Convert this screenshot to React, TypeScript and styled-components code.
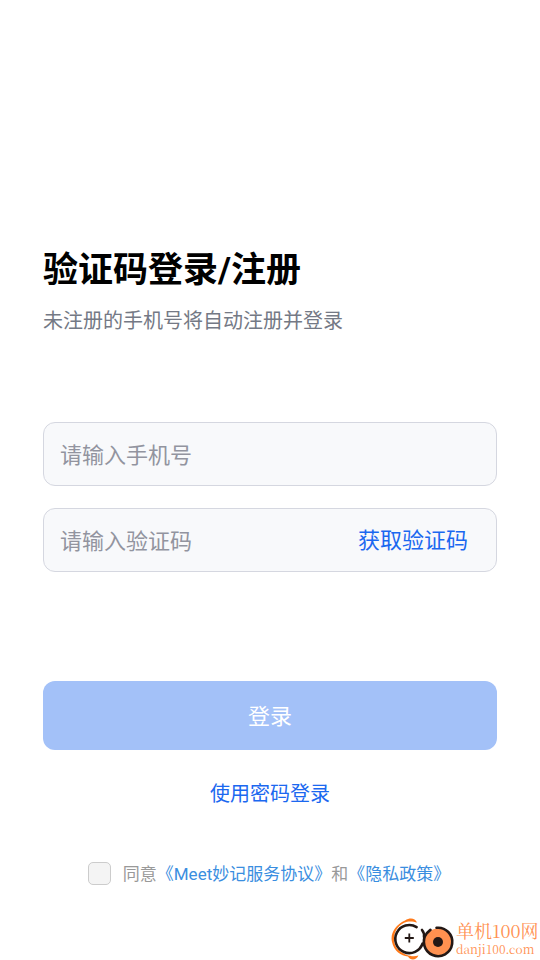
import React, { useState } from "react";
import styled, { createGlobalStyle } from "styled-components";

const GlobalStyle = createGlobalStyle`
  * { box-sizing: border-box; }
  body {
    margin: 0;
    background: #fff;
    font-family: Roboto, "Noto Sans CJK SC", sans-serif;
  }
  button, input { font-family: inherit; }
`;

const Page = styled.main`
  display: flex;
  flex-direction: column;
  min-height: 100vh;
  padding-top: 245px;
`;

const Form = styled.form`
  display: flex;
  flex-direction: column;
  padding: 0 43px;
`;

const Title = styled.h1`
  margin: 0;
  font-size: 35px;
  line-height: 52px;
  font-weight: 700;
  color: #000;
`;

const Subtitle = styled.p`
  margin: 9px 0 0;
  font-size: 20px;
  line-height: 30px;
  color: #747985;
`;

const Fields = styled.div`
  display: flex;
  flex-direction: column;
  gap: 22px;
  margin-top: 86px;
`;

const Field = styled.div`
  display: flex;
  align-items: center;
  height: 64px;
  padding: 2px 28px 0 16px;
  border: 1px solid #d5d7e0;
  border-radius: 12px;
  background: #f8f9fb;
`;

const TextInput = styled.input`
  flex: 1;
  min-width: 0;
  height: 100%;
  padding: 0;
  border: 0;
  outline: 0;
  background: transparent;
  font-size: 22px;
  color: #111;
  &::placeholder {
    color: #92949f;
    opacity: 1;
  }
`;

const TextButton = styled.button<{ $size: number }>`
  padding: 0;
  border: 0;
  background: transparent;
  font-size: ${({ $size }) => $size}px;
  line-height: 32px;
  color: #1b68f0;
  cursor: pointer;
`;

const SubmitButton = styled.button`
  height: 69px;
  margin-top: 109px;
  padding: 0 0 4px;
  border: 0;
  border-radius: 12px;
  background: #a3c1f8;
  font-size: 22px;
  color: #fff;
`;

const SwitchRow = styled.div`
  display: flex;
  justify-content: center;
  margin-top: 28px;
`;

const Agreement = styled.div`
  display: flex;
  align-items: center;
  justify-content: center;
  gap: 12px;
  margin-top: 49px;
  padding-right: 2px;
  font-size: 17px;
  line-height: 26px;
  color: #999;
`;

const AgreementLabel = styled.label`
  padding-top: 2px;
`;

const Checkbox = styled.input`
  appearance: none;
  flex: none;
  width: 23px;
  height: 23px;
  margin: 0;
  border: 1px solid #ccc;
  border-radius: 5px;
  background: #f4f4f4;
  &:checked { background: #1b68f0; }
`;

const PolicyLink = styled.a`
  color: #3a8ee0;
  text-decoration: none;
`;

const SiteMark = styled.footer`
  display: flex;
  align-items: flex-end;
  justify-content: flex-end;
  margin-top: auto;
  padding-right: 3px;
`;

const SiteLogo = styled.svg`
  flex: none;
  width: 68px;
  height: 48px;
`;

const SiteText = styled.div`
  display: flex;
  flex-direction: column;
  width: 81px;
  padding-bottom: 2px;
  font-family: "Noto Serif CJK SC", "Liberation Serif", "Noto Sans CJK SC", serif;
  color: #ff9152;
  white-space: nowrap;
`;

const SiteName = styled.span`
  font-size: 18px;
  line-height: 20px;
`;

const SiteAddress = styled.span`
  font-size: 12px;
  line-height: 18px;
`;

export default function App() {
  const [agreed, setAgreed] = useState(false);
  return (
    <>
      <GlobalStyle />
      <Page>
        <Form onSubmit={(e) => e.preventDefault()}>
          <Title>验证码登录/注册</Title>
          <Subtitle>未注册的手机号将自动注册并登录</Subtitle>
          <Fields>
            <Field>
              <TextInput type="tel" aria-label="手机号" placeholder="请输入手机号" />
            </Field>
            <Field>
              <TextInput type="text" aria-label="验证码" placeholder="请输入验证码" />
              <TextButton type="button" $size={22}>获取验证码</TextButton>
            </Field>
          </Fields>
          <SubmitButton type="submit">登录</SubmitButton>
          <SwitchRow>
            <TextButton type="button" $size={20}>使用密码登录</TextButton>
          </SwitchRow>
          <Agreement>
            <Checkbox
              id="agree"
              type="checkbox"
              checked={agreed}
              onChange={(e) => setAgreed(e.target.checked)}
            />
            <AgreementLabel htmlFor="agree">
              同意<PolicyLink href="#service">《Meet妙记服务协议》</PolicyLink>和
              <PolicyLink href="#privacy">《隐私政策》</PolicyLink>
            </AgreementLabel>
          </Agreement>
        </Form>
        <SiteMark>
          <SiteLogo viewBox="0 0 68 48" fill="none" aria-hidden="true">
            <path
              d="M29 10.500C27 6 22 5.500 17 8.500C7 13 2 22 4 30C6 39 13 44 20 44.500C22 48.500 28 49 30.500 43.500C26 45 22 44 19 43C11 40 6 35 6 27C6 19 11 12 19 9.800C22 9 26 9.500 29 10.500Z"
              fill="#ff7a1a"
            />
            <path
              d="M28.600 15.100A14 14 0 1 0 34.600 31.500"
              stroke="#231815"
              strokeWidth="2.600"
              strokeLinecap="round"
            />
            <path d="M21.300 21.500V30.500M16.800 26H25.800" stroke="#231815" strokeWidth="1.800" />
            <circle cx="50" cy="30" r="13.500" fill="#ff9150" />
            <path
              d="M48.500 15.800A14.200 14.200 0 1 1 38.800 21.300L42.500 17.800"
              stroke="#231815"
              strokeWidth="2.600"
              strokeLinecap="round"
              strokeLinejoin="round"
            />
            <path d="M34 18Q36.500 21 36 25" stroke="#231815" strokeWidth="2.600" strokeLinecap="round" />
            <circle cx="50" cy="30" r="5" fill="#231815" />
          </SiteLogo>
          <SiteText>
            <SiteName>单机100网</SiteName>
            <SiteAddress>danji100.com</SiteAddress>
          </SiteText>
        </SiteMark>
      </Page>
    </>
  );
}
